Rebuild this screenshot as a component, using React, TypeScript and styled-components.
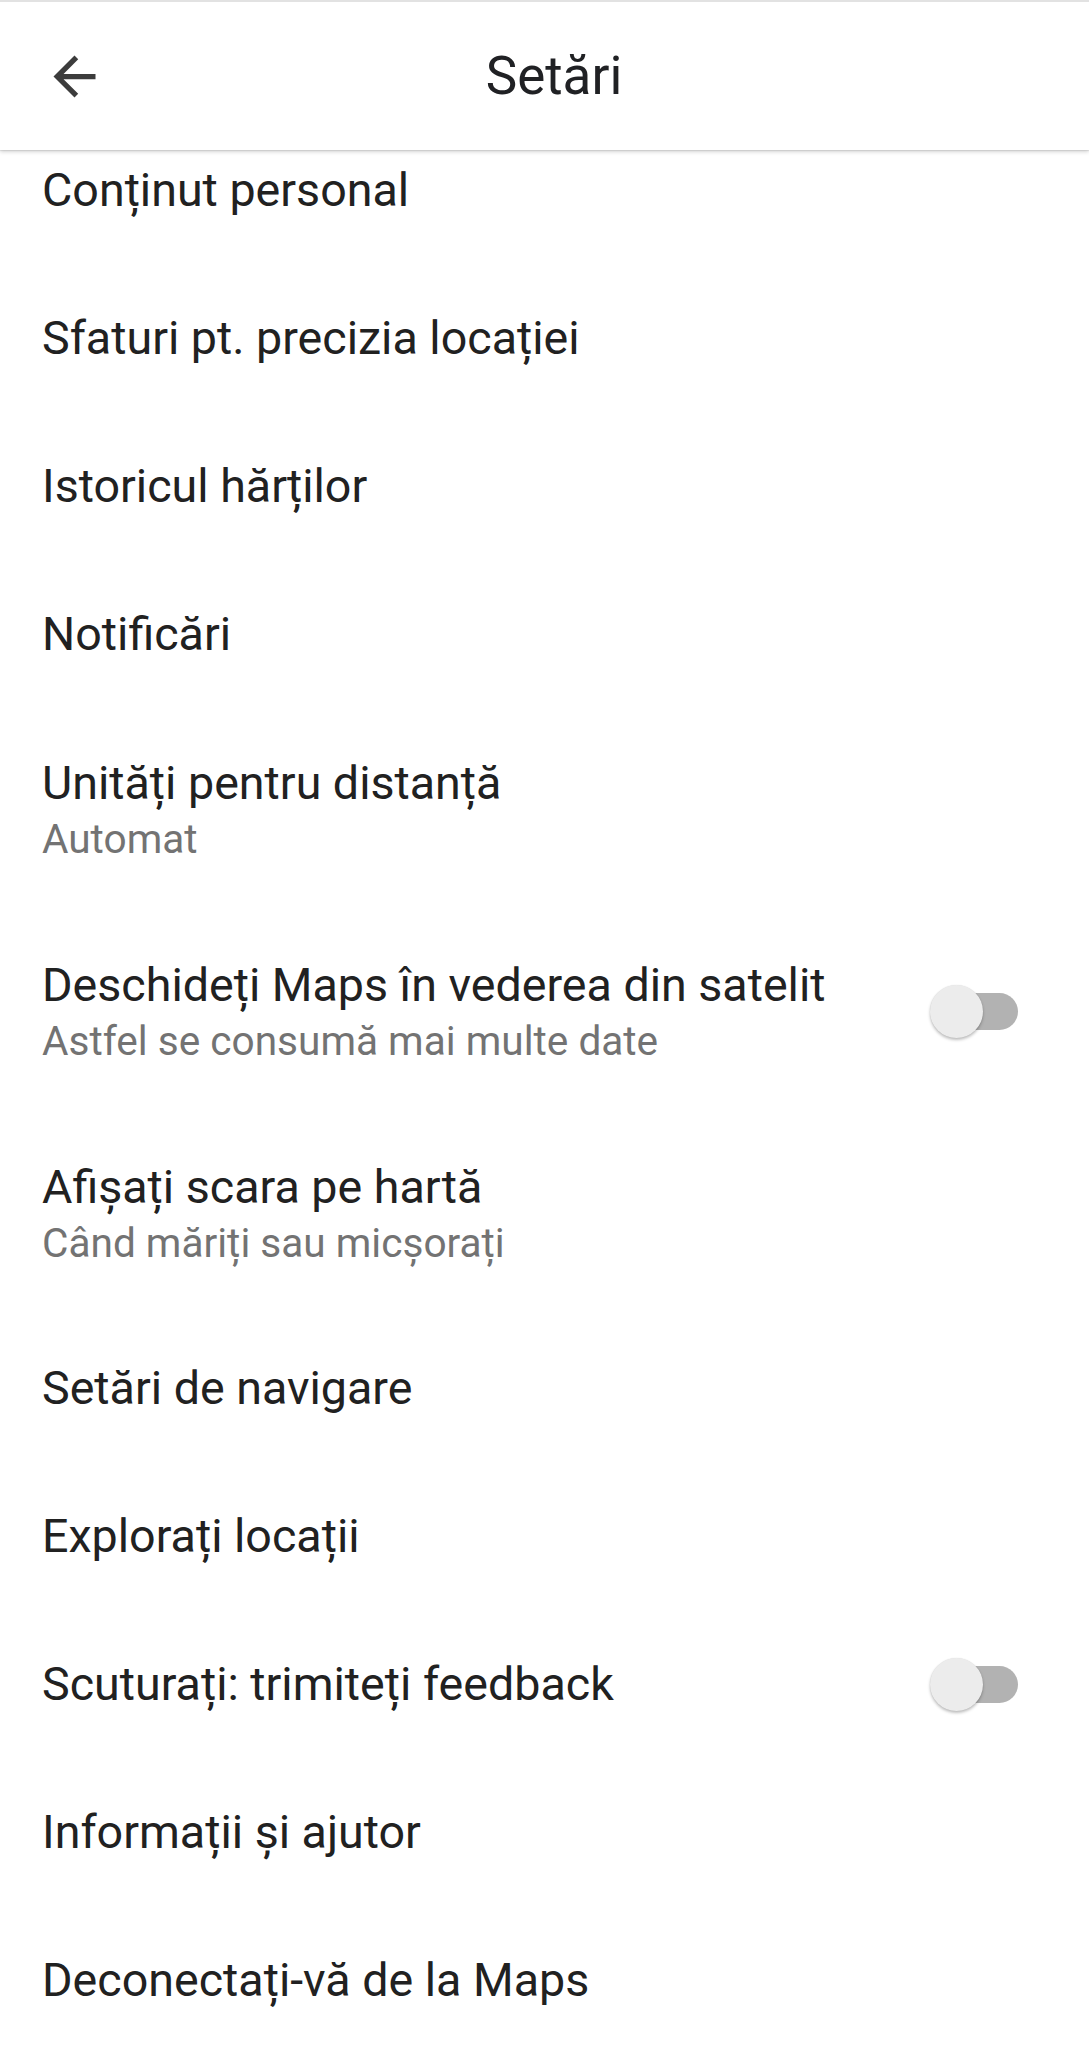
import React from "react";
import styled, { createGlobalStyle } from "styled-components";

const GlobalStyle = createGlobalStyle`
  html, body {
    margin: 0;
    padding: 0;
    background: #ffffff;
  }
  body {
    font-family: Roboto, "Noto Sans", "Liberation Sans", sans-serif;
    -webkit-font-smoothing: antialiased;
  }
`;

const Screen = styled.div`
  width: 1089px;
  height: 2048px;
  overflow: hidden;
  background: #ffffff;
`;

const Header = styled.header`
  position: relative;
  z-index: 2;
  height: 148px;
  display: flex;
  align-items: center;
  padding: 0 43px;
  background: #ffffff;
  border-top: 2px solid #e2e2e2;
  box-shadow: 0 2px 4px rgba(0, 0, 0, 0.16), 0 1px 1px rgba(0, 0, 0, 0.08);
`;

const BackButton = styled.button`
  width: 63px;
  height: 63px;
  padding: 0;
  border: none;
  background: none;
  display: flex;
  align-items: center;
  justify-content: center;
  color: #3c3c3c;
`;

const Title = styled.h1`
  flex: 1;
  margin: 0;
  text-align: center;
  font-size: 53px;
  font-weight: 400;
  color: #202124;
`;

const Spacer = styled.div`
  width: 44px;
`;

const List = styled.div`
  margin-top: -34px;
  display: flex;
  flex-direction: column;
`;

const Row = styled.div<{ $double?: boolean }>`
  display: flex;
  align-items: center;
  box-sizing: border-box;
  min-height: ${(p) => (p.$double ? "202px" : "148px")};
  padding: 0 71px 0 42px;
`;

const Texts = styled.div`
  flex: 1;
  display: flex;
  flex-direction: column;
`;

const Label = styled.div`
  font-size: 46.6px;
  line-height: 60px;
  color: #212121;
`;

const Hint = styled.div`
  font-size: 40.6px;
  line-height: 52px;
  color: #737373;
`;

const Switch = styled.div`
  position: relative;
  width: 88px;
  height: 53px;
  flex-shrink: 0;
`;

const Track = styled.div`
  position: absolute;
  left: 5px;
  right: 0;
  top: 8px;
  height: 37px;
  border-radius: 19px;
  background: #b2b2b2;
`;

const Thumb = styled.div`
  position: absolute;
  left: 0;
  top: 0;
  width: 53px;
  height: 53px;
  border-radius: 50%;
  background: #ececec;
  box-shadow: 0 2px 3px rgba(0, 0, 0, 0.25), 0 0 1px rgba(0, 0, 0, 0.12);
`;

const ArrowBack = () => (
  <svg width="63" height="63" viewBox="0 0 24 24" fill="currentColor">
    <path d="M20 11H7.83l5.59-5.59L12 4l-8 8 8 8 1.41-1.41L7.83 13H20v-2z" />
  </svg>
);

const Toggle = () => (
  <Switch>
    <Track />
    <Thumb />
  </Switch>
);

type Item = { label: string; hint?: string; toggle?: boolean };

const items: Item[] = [
  { label: "Conținut personal" },
  { label: "Sfaturi pt. precizia locației" },
  { label: "Istoricul hărților" },
  { label: "Notificări" },
  { label: "Unități pentru distanță", hint: "Automat" },
  {
    label: "Deschideți Maps în vederea din satelit",
    hint: "Astfel se consumă mai multe date",
    toggle: true,
  },
  { label: "Afișați scara pe hartă", hint: "Când măriți sau micșorați" },
  { label: "Setări de navigare" },
  { label: "Explorați locații" },
  { label: "Scuturați: trimiteți feedback", toggle: true },
  { label: "Informații și ajutor" },
  { label: "Deconectați-vă de la Maps" },
];

export default function App() {
  return (
    <Screen>
      <GlobalStyle />
      <Header>
        <BackButton aria-label="Înapoi">
          <ArrowBack />
        </BackButton>
        <Title>Setări</Title>
        <Spacer />
      </Header>
      <List>
        {items.map((item) => (
          <Row key={item.label} $double={!!item.hint}>
            <Texts>
              <Label>{item.label}</Label>
              {item.hint && <Hint>{item.hint}</Hint>}
            </Texts>
            {item.toggle && <Toggle />}
          </Row>
        ))}
      </List>
    </Screen>
  );
}
